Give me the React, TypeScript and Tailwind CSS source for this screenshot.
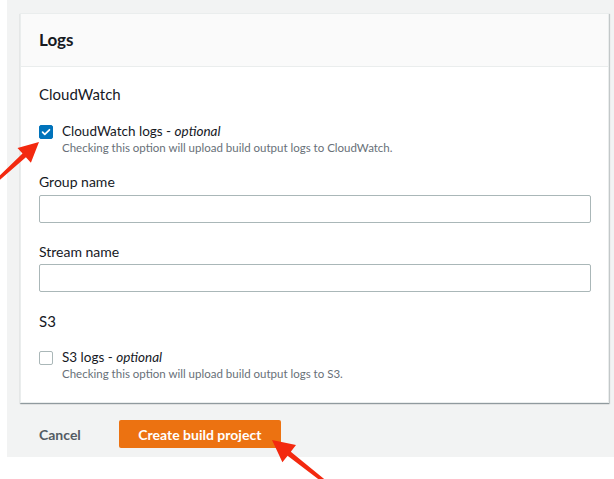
import { useState } from "react"

function Checkbox({ checked, onChange }: { checked: boolean; onChange: () => void }) {
  return (
    <button
      type="button"
      onClick={onChange}
      className={`mt-[3px] flex h-[14px] w-[14px] shrink-0 items-center justify-center rounded-[2px] border ${
        checked ? "border-[#0073bb] bg-[#0073bb]" : "border-[#aab7b8] bg-white"
      }`}
    >
      {checked && (
        <svg viewBox="0 0 14 14" className="h-[12px] w-[12px]">
          <path d="M3 7.2l2.6 2.6L11 4.4" fill="none" stroke="white" strokeWidth="2" strokeLinecap="round" strokeLinejoin="round" />
        </svg>
      )}
    </button>
  )
}

function CheckRow({ label, desc, checked, onChange }: { label: string; desc: string; checked: boolean; onChange: () => void }) {
  return (
    <div className="flex gap-[9px]">
      <Checkbox checked={checked} onChange={onChange} />
      <div>
        <p className="text-[13.5px] leading-[18px] text-[#16191f]">
          {label} - <i>optional</i>
        </p>
        <p className="text-[11.5px] leading-4 text-[#687078]">{desc}</p>
      </div>
    </div>
  )
}

export default function App() {
  const [cloudWatch, setCloudWatch] = useState(true)
  const [s3, setS3] = useState(false)
  const [group, setGroup] = useState("")
  const [stream, setStream] = useState("")

  return (
    <div className="relative h-[479px] w-[614px] overflow-hidden bg-white font-['Lato',sans-serif]">
      <div className="ml-[7px] h-[457px] bg-[#f2f3f3] pl-[13px] pr-[5px] pt-[13px]">
        {/* Logs card */}
        <div className="w-[589px] border border-[#eaeded] bg-white shadow-[0_1px_1px_0_rgba(0,28,36,0.3),1px_1px_1px_0_rgba(0,28,36,0.15)]">
          <div className="flex h-[53px] items-center border-b border-[#eaeded] bg-[#fafafa] px-[18px]">
            <h2 className="text-[17px] font-bold text-[#16191f]">Logs</h2>
          </div>

          <div className="px-[18px] pb-[20px] pt-[17px] text-[#16191f]">
            <h3 className="text-[15px] leading-5">CloudWatch</h3>

            <div className="mt-[18px]">
              <CheckRow
                label="CloudWatch logs"
                desc="Checking this option will upload build output logs to CloudWatch."
                checked={cloudWatch}
                onChange={() => setCloudWatch(!cloudWatch)}
              />
            </div>

            <label className="mt-[16px] block text-[14px] leading-5">Group name</label>
            <input
              value={group}
              onChange={(e) => setGroup(e.target.value)}
              className="mt-[3px] block h-[28px] w-[552px] rounded-[2px] border border-[#aab7b8] px-2 text-[14px] outline-none"
            />

            <label className="mt-[19px] block text-[14px] leading-5">Stream name</label>
            <input
              value={stream}
              onChange={(e) => setStream(e.target.value)}
              className="mt-[2px] block h-[28px] w-[552px] rounded-[2px] border border-[#aab7b8] px-2 text-[14px] outline-none"
            />

            <h3 className="mt-[19px] text-[15px] leading-5">S3</h3>

            <div className="mt-[17px]">
              <CheckRow
                label="S3 logs"
                desc="Checking this option will upload build output logs to S3."
                checked={s3}
                onChange={() => setS3(!s3)}
              />
            </div>
          </div>
        </div>

        {/* footer actions */}
        <div className="mt-[17px] flex items-center">
          <button className="ml-[19px] text-[14px] font-bold text-[#545b64]">Cancel</button>
          <button className="ml-[38px] h-[28px] w-[162px] rounded-[2px] bg-[#ec7211] text-[14px] font-bold text-white">
            Create build project
          </button>
        </div>
      </div>

      {/* annotation arrows */}
      <svg className="pointer-events-none absolute inset-0" width="614" height="479" viewBox="0 0 614 479">
        <polygon
          points="39,142 30.9,162.8 25.9,157.2 -4,183.1 -6,180.9 22.5,153.6 17.5,148"
          fill="#f3290f"
        />
        <polygon
          points="272,440 296,445.1 290.8,451.7 326.1,480.6 323.9,483.4 287.6,455.7 282.4,462.3"
          fill="#f3290f"
        />
      </svg>
    </div>
  )
}
